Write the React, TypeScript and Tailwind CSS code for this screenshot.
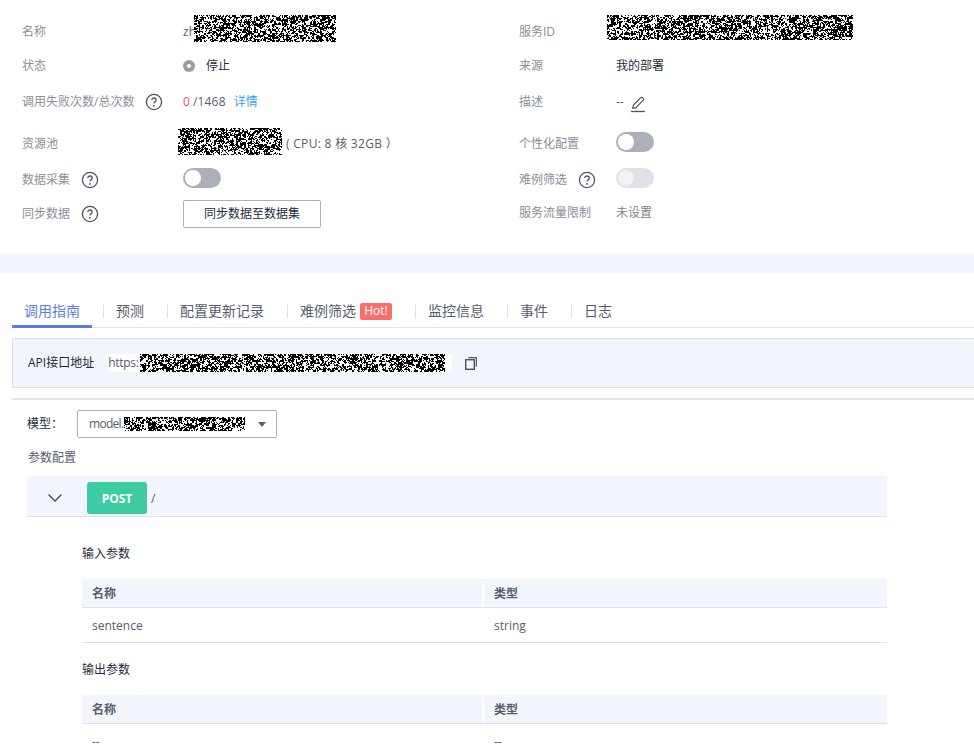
import { ChevronDown } from 'lucide-react';
import type { ReactNode } from 'react';

// seeded noise, stands in for the scribbled-out values in the screenshot
function Scribble({ w, h, seed }: { w: number; h: number; seed: number }) {
  let s = seed;
  const next = () => {
    s = (s * 1664525 + 1013904223) % 4294967296;
    return s / 4294967296;
  };
  const cols = Math.ceil(w / 2);
  const rows = Math.ceil(h / 2);
  const cells: boolean[] = [];
  for (let i = 0; i < cols * rows; i += 1) cells.push(next() < 0.6);
  let d = '';
  for (let y = 0; y < h; y += 1) {
    for (let x = 0; x < w; x += 1) {
      const base = cells[(y >> 1) * cols + (x >> 1)];
      const flip = next() < 0.2;
      if (base !== flip) d += `M${x} ${y}h1v1h-1z`;
    }
  }
  return (
    <svg width={w} height={h} className="relative shrink-0 bg-white" shapeRendering="crispEdges">
      <path d={d} fill="#000" />
    </svg>
  );
}

function Help() {
  return (
    <svg width="18" height="18" viewBox="0 0 18 18" fill="none" className="shrink-0">
      <circle cx="9" cy="9" r="7.6" stroke="#4d5264" strokeWidth="1.3" />
      <path
        d="M6.8 7.1c0-1.3 1-2.1 2.2-2.1s2.2.8 2.2 2c0 1.7-2.2 1.8-2.2 3.6"
        stroke="#4d5264"
        strokeWidth="1.3"
      />
      <circle cx="9" cy="12.9" r="0.9" fill="#4d5264" />
    </svg>
  );
}

function Toggle({ disabled }: { disabled?: boolean }) {
  return (
    <div
      className={`mb-1 flex h-5 w-[38px] items-center rounded-full pl-0.5 ${disabled ? 'bg-[#dfe1e6]' : 'bg-[#adb0b8]'}`}
    >
      <div className={`h-4 w-4 rounded-full ${disabled ? 'bg-[#f2f2f5]' : 'bg-white'}`} />
    </div>
  );
}

function Row({ h, label, help, value }: { h: string; label: string; help?: boolean; value: ReactNode }) {
  return (
    <div className={`flex items-center ${h}`}>
      <div className="flex items-center gap-[11px] text-[#8a8e99]">
        <span>{label}</span>
        {help && <Help />}
      </div>
      {value}
    </div>
  );
}

function ParamTable({ title, rows }: { title: string; rows: string[] }) {
  return (
    <div>
      <div className="flex h-[18px] items-center pt-[2px] text-[#252b3a]">{title}</div>
      <div className="mt-[17px] w-[805px]">
        <div className="flex h-[29px] items-center border-b border-[#dfe1e6] bg-[#f2f5fc] pt-[2px] font-bold text-[#575d6c]">
          <div className="flex h-full w-[402px] items-center border-r-2 border-white pl-2.5">名称</div>
          <div className="pl-2.5">类型</div>
        </div>
        <div className="flex h-[35px] items-center border-b border-[#dfe1e6] pt-[2px] text-[#575d6c]">
          <div className="w-[402px] pl-2.5">{rows[0]}</div>
          <div className="pl-2.5">{rows[1]}</div>
        </div>
      </div>
    </div>
  );
}

const tabs = ['预测', '配置更新记录', '难例筛选', '监控信息', '事件', '日志'];

export default function App() {
  return (
    <div
      className="h-[756px] w-[974px] overflow-hidden bg-white text-xs text-[#252b3a]"
      style={{ fontFamily: '"Open Sans", "Noto Sans CJK SC", sans-serif' }}
    >
      {/* Basic info */}
      <div className="flex h-[253px] pt-[15px]">
        <div className="w-[519px] pl-[22px] [&>div>div:first-child]:w-[161px]">
          <Row
            h="h-[34px]"
            label="名称"
            value={
              <div className="flex items-center">
                <span className="text-[#575d6c]">zh</span>
                <div className="-ml-[2px] mb-[7px]">
                  <Scribble w={142} h={27} seed={11} />
                </div>
              </div>
            }
          />
          <Row
            h="h-[34px]"
            label="状态"
            value={
              <div className="flex items-center gap-[11px]">
                <div className="flex h-3 w-3 items-center justify-center rounded-full bg-[#9a9ca3]">
                  <div className="h-1 w-1 rounded-full bg-white" />
                </div>
                <span>停止</span>
              </div>
            }
          />
          <Row
            h="h-[38px]"
            label="调用失败次数/总次数"
            help
            value={
              <div className="flex items-center text-[#575d6c]">
                <span className="text-[#f5475e]">0</span>
                <span className="ml-[3px] tracking-[0.2px]">/1468</span>
                <span className="ml-2 text-[#3c9cf5]">详情</span>
              </div>
            }
          />
          <Row
            h="h-[45px]"
            label="资源池"
            value={
              <div className="-ml-[5px] flex items-center">
                <div className="mb-[5px]">
                  <Scribble w={104} h={27} seed={37} />
                </div>
                <span className="ml-1 whitespace-pre tracking-[0.3px] text-[#575d6c]">( CPU: 8 核 32GB ）</span>
              </div>
            }
          />
          <Row h="h-[28px]" label="数据采集" help value={<Toggle />} />
          <Row
            h="h-[40px]"
            label="同步数据"
            help
            value={
              <button className="h-7 w-[138px] rounded-[2px] border border-[#adb0b8] text-[#252b3a]">同步数据至数据集</button>
            }
          />
        </div>
        <div className="[&>div>div:first-child]:w-[97px]">
          <Row
            h="h-[34px]"
            label="服务ID"
            value={
              <div className="-ml-[9px] mb-[9px]">
                <Scribble w={246} h={25} seed={73} />
              </div>
            }
          />
          <Row h="h-[34px]" label="来源" value={<span>我的部署</span>} />
          <Row
            h="h-[38px]"
            label="描述"
            value={
              <div className="flex items-center text-[#575d6c]">
                <span>--</span>
                <svg width="16" height="18" viewBox="0 0 16 18" fill="none" className="ml-1.5 mt-[5px]" stroke="#4d5264">
                  <path d="M2.8 12.2 3.4 9 10.8 1.7a1.3 1.3 0 0 1 1.9 0l.5.5a1.3 1.3 0 0 1 0 1.9L6 11.6z" strokeWidth="1.2" />
                  <path d="M1 15.5h14" strokeWidth="1.3" />
                </svg>
              </div>
            }
          />
          <Row h="h-[45px]" label="个性化配置" value={<Toggle />} />
          <Row h="h-[28px]" label="难例筛选" help value={<Toggle disabled />} />
          <Row h="h-[38px]" label="服务流量限制" value={<span className="text-[#7f838c]">未设置</span>} />
        </div>
      </div>
      <div className="h-5 bg-[#f2f5fc]" />

      {/* Tabs */}
      <div className="ml-3 mt-[24px] flex h-[31px] items-start border-b border-[#dfe1e6] text-sm text-[#575d6c]">
        <div className="flex h-[31px] w-[80px] items-start justify-center border-b-[3px] border-[#5e7ce0] pt-1 text-[#5e7ce0]">
          调用指南
        </div>
        <div className="flex pl-[11px] pt-1">
          {tabs.map((tab) => (
            <div key={tab} className="flex h-5 items-center">
              <div className="mr-3 h-[14px] w-px bg-[#dfe1e6]" />
              <span>{tab}</span>
              {tab === '难例筛选' && (
                <span className="ml-1 flex h-[17px] w-8 items-center justify-center rounded-[2px] bg-[#f66f6a] text-xs text-white">
                  Hot!
                </span>
              )}
              <div className="w-[23px]" />
            </div>
          ))}
        </div>
      </div>

      {/* API address */}
      <div className="-mr-1 ml-3 mt-2.5 flex h-[50px] items-center border border-[#dfe1e6] bg-[#f2f5fc] pl-[15px]">
        <span>API接口地址</span>
        <div className="ml-[14px] flex h-[18px] w-[344px] items-center bg-white">
          <span className="tracking-[-0.3px] text-[#575d6c]">https:</span>
          <div className="ml-[1px]">
            <Scribble w={305} h={18} seed={91} />
          </div>
        </div>
        <svg width="12" height="13" viewBox="0 0 12 13" fill="none" className="ml-[13px]" stroke="#4d5264">
          <rect x="0.7" y="2.7" width="8.6" height="9.6" strokeWidth="1.4" />
          <path d="M3.5.7h7.8v8.8" strokeWidth="1.2" />
        </svg>
      </div>
      <div className="ml-3 mt-2.5 h-0.5 bg-[#e5e3e8]" />

      {/* Model */}
      <div className="ml-[27px] mt-2.5 flex h-7 items-center">
        <span className="w-[50px]">模型：</span>
        <div className="flex h-7 w-[200px] items-center rounded-[2px] border border-[#adb0b8] pl-[11px] text-[#575d6c]">
          <span className="w-[35px] tracking-[-0.7px]">model.</span>
          <Scribble w={121} h={14} seed={53} />
          <svg width="8" height="5" viewBox="0 0 8 5" className="ml-[13px]">
            <path d="M0 0h8L4 5z" fill="#575d6c" />
          </svg>
        </div>
      </div>
      <div className="ml-7 mt-[12px] flex h-[16px] items-center text-[#575d6c]">参数配置</div>

      {/* POST */}
      <div className="ml-[27px] mt-[10px] flex h-[41px] w-[860px] items-start border-b border-[#dfe1e6] bg-[#f2f5fc] pt-[6px]">
        <ChevronDown className="ml-4 mt-1 h-6 w-6 text-[#4d5264]" strokeWidth={1.5} />
        <div className="ml-5 flex h-8 w-[60px] items-center justify-center rounded-[3px] bg-[#3ecba1] pt-[1px] font-bold text-white">
          POST
        </div>
        <span className="ml-1 mt-[9px] text-[#575d6c]">/</span>
      </div>

      {/* Params */}
      <div className="ml-[82px] mt-[27px] flex flex-col gap-[17px]">
        <ParamTable title="输入参数" rows={['sentence', 'string']} />
        <ParamTable title="输出参数" rows={['--', '--']} />
      </div>
    </div>
  );
}
